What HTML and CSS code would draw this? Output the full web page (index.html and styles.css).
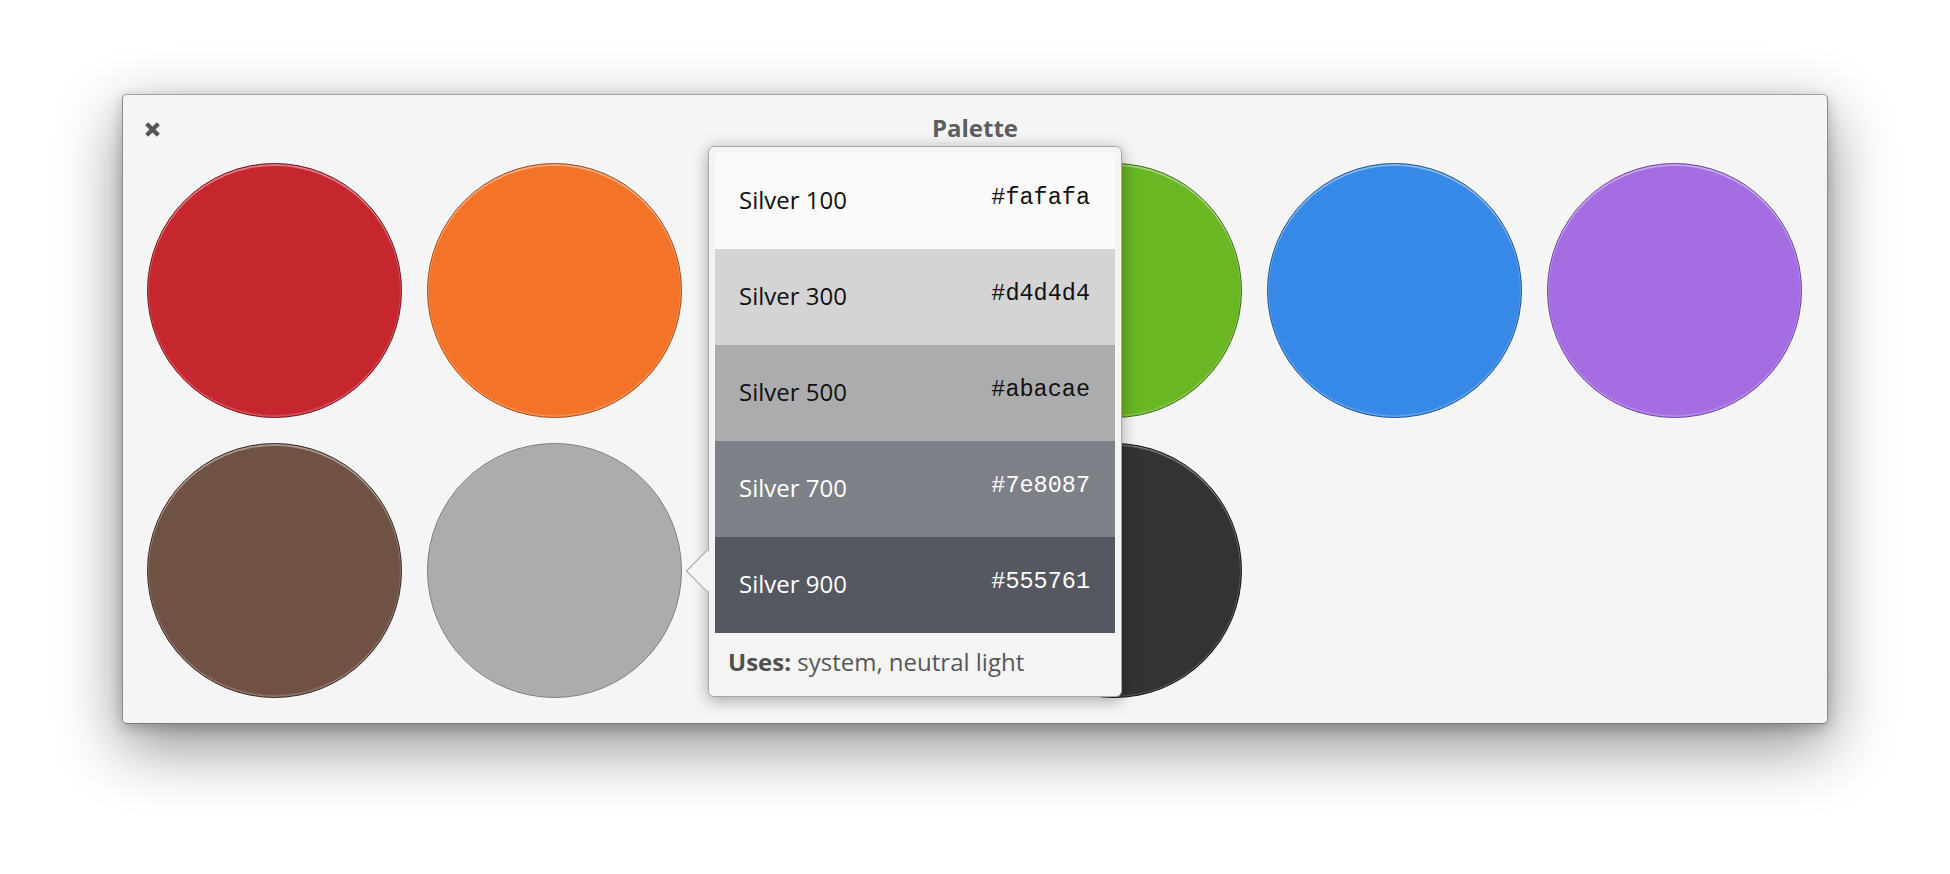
FILE: index.html
```html
<!DOCTYPE html>
<html lang="en">
<head>
<meta charset="utf-8">
<title>Palette</title>
<link rel="stylesheet" href="styles.css">
</head>
<body>
<div class="desktop">
  <div class="window">
    <div class="header">
      <button class="close" aria-label="Close">
        <svg viewBox="0 0 16 16" width="17" height="17"><path d="M2.5 2.5 L13.5 13.5 M13.5 2.5 L2.5 13.5" stroke="#555" stroke-width="4" fill="none"/></svg>
      </button>
      <div class="title">Palette</div>
      <div></div>
    </div>
    <div class="grid">
      <div class="swatch strawberry"></div>
      <div class="swatch orange"></div>
      <div class="swatch banana covered"></div>
      <div class="swatch lime"></div>
      <div class="swatch blueberry"></div>
      <div class="swatch grape"></div>
      <div class="swatch cocoa"></div>
      <div class="swatch silver"></div>
      <div class="swatch slate covered"></div>
      <div class="swatch black"></div>
    </div>
    <div class="popover">
      <div class="shades">
        <div class="shade s100"><span class="name">Silver 100</span><span class="hex">#fafafa</span></div>
        <div class="shade s300"><span class="name">Silver 300</span><span class="hex">#d4d4d4</span></div>
        <div class="shade s500"><span class="name">Silver 500</span><span class="hex">#abacae</span></div>
        <div class="shade s700 dark"><span class="name">Silver 700</span><span class="hex">#7e8087</span></div>
        <div class="shade s900 dark"><span class="name">Silver 900</span><span class="hex">#555761</span></div>
      </div>
      <div class="uses"><b>Uses:</b>&nbsp;system, neutral light</div>
    </div>
  </div>
</div>
</body>
</html>
```
FILE: styles.css
```css
html, body {
  margin: 0;
  padding: 0;
  background: #ffffff;
}
body {
  font-family: "Open Sans", "Noto Sans", sans-serif;
}
.desktop {
  padding: 94px 0 0 122px;
  height: 874px;
  box-sizing: border-box;
  overflow: hidden;
}
.window {
  position: relative;
  width: 1706px;
  box-sizing: border-box;
  background: #f5f5f5;
  border: 1px solid #8c8c8c;
  border-top-color: #a2a2a2;
  border-bottom-color: #767676;
  border-radius: 5px;
  box-shadow: 0 22px 64px rgba(0,0,0,0.45), 0 4px 14px rgba(0,0,0,0.22);
}
.header {
  display: grid;
  grid-template-columns: 1fr auto 1fr;
  align-items: center;
  height: 68px;
  padding-bottom: 3px;
  box-sizing: border-box;
}
.close {
  justify-self: start;
  margin: 3px 0 0 21px;
  padding: 0;
  border: 0;
  background: none;
  width: 17px;
  height: 17px;
  display: flex;
}
.title {
  font-size: 24px;
  font-weight: 700;
  color: #5d5d5d;
}
.grid {
  display: grid;
  grid-template-columns: repeat(6, 255px);
  grid-auto-rows: 255px;
  gap: 25px;
  padding: 0 24px 25px 24px;
}
.swatch {
  border-radius: 50%;
  box-sizing: border-box;
  border: 1.5px solid rgba(0,0,0,0.5);
  box-shadow: inset 0 0 0 1px rgba(255,255,255,0.16), inset 0 2px 0 0 rgba(255,255,255,0.35), inset 0 -2px 0 0 rgba(255,255,255,0.12);
}
.covered { visibility: hidden; }
.strawberry { background: #c6262e; border-color: #7a141a; }
.orange { background: #f37329; border-color: #a94a12; }
.banana { background: #f9c440; }
.lime { background: #68b723; border-color: #3b7210; }
.blueberry { background: #3689e6; border-color: #1c5597; }
.grape { background: #a56de2; border-color: #6e43a3; }
.cocoa { background: #6f5244; border-color: #3d2a22; }
.silver { background: #abacae; border-color: #7c7d80; box-shadow: inset 0 0 0 1px rgba(255,255,255,0.06); }
.slate { background: #485a6c; }
.black { background: #333333; border-color: #151515; box-shadow: inset 0 0 0 1px rgba(255,255,255,0.2), inset 0 2px 0 0 rgba(255,255,255,0.2); }

.popover {
  position: absolute;
  left: 585px;
  top: 51px;
  width: 414px;
  height: 551px;
  box-sizing: border-box;
  padding: 6px;
  background: #f4f4f4;
  border: 1px solid #a7a7a7;
  border-radius: 6px;
  box-shadow: 0 3px 16px rgba(0,0,0,0.34);
  display: flex;
  flex-direction: column;
}
.popover::before {
  content: "";
  position: absolute;
  left: -17px;
  top: 409px;
  width: 30px;
  height: 30px;
  background: #f4f4f4;
  border-left: 1px solid #a7a7a7;
  border-bottom: 1px solid #a7a7a7;
  box-sizing: border-box;
  transform: rotate(45deg);
}
.shades {
  position: relative;
  z-index: 1;
  display: flex;
  flex-direction: column;
}
.shade {
  height: 96px;
  box-sizing: border-box;
  display: flex;
  align-items: center;
  justify-content: space-between;
  padding: 0 25px 4px 24px;
  color: #111;
}
.shade.dark { color: #fff; }
.s100 { background: #fafafa; border-radius: 4px 4px 0 0; }
.s300 { background: #d4d4d4; }
.s500 { background: #abacae; }
.s700 { background: #7e8087; }
.s900 { background: #555761; }
.name {
  font-size: 24px;
}
.hex {
  font-family: "Liberation Mono", monospace;
  font-size: 23.5px;
  margin-top: -3px;
}
.uses {
  position: relative;
  z-index: 1;
  flex: 1;
  display: flex;
  align-items: center;
  padding: 0 0 0 13px;
  font-size: 24px;
  color: #575757;
}
.uses b {
  color: #4f4f4f;
  font-weight: 700;
}
```
